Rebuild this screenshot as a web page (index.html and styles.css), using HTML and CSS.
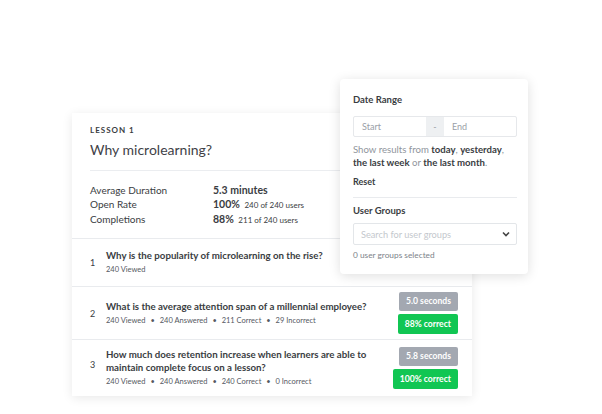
FILE: index.html
```html
<!DOCTYPE html>
<html>
<head>
<meta charset="utf-8">
<link rel="stylesheet" href="styles.css">
</head>
<body>
<div class="stage">
  <div class="card">
    <div class="card-head">
      <div class="eyebrow">LESSON 1</div>
      <div class="title">Why microlearning?</div>
      <div class="rule"></div>
      <div class="stats">
        <div class="stat-label">Average Duration</div>
        <div class="stat-val"><b>5.3 minutes</b></div>
        <div class="stat-label">Open Rate</div>
        <div class="stat-val"><b>100%</b> <span class="small">240 of 240 users</span></div>
        <div class="stat-label">Completions</div>
        <div class="stat-val"><b>88%</b> <span class="small">211 of 240 users</span></div>
      </div>
    </div>
    <div class="q q1">
      <div class="qnum">1</div>
      <div class="qbody">
        <div class="qtitle">Why is the popularity of microlearning on the rise?</div>
        <div class="qsub">240 Viewed</div>
      </div>
    </div>
    <div class="q q2">
      <div class="qnum">2</div>
      <div class="qbody">
        <div class="qtitle">What is the average attention span of a millennial employee?</div>
        <div class="qsub">240 Viewed <span class="dot">•</span> 240 Answered <span class="dot">•</span> 211 Correct <span class="dot">•</span> 29 Incorrect</div>
      </div>
      <div class="badges">
        <div class="badge grey">5.0 seconds</div>
        <div class="badge green">88% correct</div>
      </div>
    </div>
    <div class="q q3">
      <div class="qnum">3</div>
      <div class="qbody">
        <div class="qtitle">How much does retention increase when learners are able to maintain complete focus on a lesson?</div>
        <div class="qsub">240 Viewed <span class="dot">•</span> 240 Answered <span class="dot">•</span> 240 Correct <span class="dot">•</span> 0 Incorrect</div>
      </div>
      <div class="badges">
        <div class="badge grey">5.8 seconds</div>
        <div class="badge green">100% correct</div>
      </div>
    </div>
  </div>

  <div class="panel">
    <div class="p-head">Date Range</div>
    <div class="range">
      <div class="field">Start</div>
      <div class="sep">-</div>
      <div class="field">End</div>
    </div>
    <div class="help">Show results from <b>today</b>, <b>yesterday</b>, <b>the last week</b> or <b>the last month</b>.</div>
    <div class="reset">Reset</div>
    <div class="p-rule"></div>
    <div class="p-head">User Groups</div>
    <div class="select">
      <span>Search for user groups</span>
      <svg width="8" height="6" viewBox="0 0 8 6"><path d="M1 1.5 L4 4.5 L7 1.5" fill="none" stroke="#444" stroke-width="1.6"/></svg>
    </div>
    <div class="selected">0 user groups selected</div>
  </div>
</div>
</body>
</html>
```

FILE: styles.css
```css
* { box-sizing: border-box; }
html, body { margin: 0; padding: 0; background: #fff; }
body {
  font-family: Lato, "Open Sans", "Liberation Sans", sans-serif;
  color: #3a3d42;
  width: 602px;
  height: 414px;
  overflow: hidden;
}
.stage {
  position: relative;
  width: 602px;
  height: 414px;
  padding: 113px 0 0 72px;
}
.card {
  width: 400px;
  background: #fff;
  box-shadow: 0 2px 10px rgba(0, 0, 0, 0.09);
}
.card-head {
  padding: 12px 18px 11px;
  border-bottom: 1px solid #e9ebee;
}
.eyebrow {
  font-size: 8px;
  font-weight: 700;
  letter-spacing: 1px;
  line-height: 10px;
  color: #3a3d42;
}
.title {
  margin-top: 5px;
  font-size: 14px;
  line-height: 20px;
  color: #3f4247;
}
.rule {
  margin-top: 10px;
  height: 1px;
  background: #ebedf0;
}
.stats {
  margin-top: 12px;
  display: grid;
  grid-template-columns: 123px 1fr;
  font-size: 10px;
  line-height: 14px;
}
.stat-val b { font-weight: 700; font-size: 10.5px; }
.small { font-size: 8px; margin-left: 2px; }
.q {
  display: flex;
  align-items: center;
  padding: 10px 14px 10px 18px;
  border-bottom: 1px solid #e9ebee;
}
.q:last-child { border-bottom: none; }
.q2 { padding-top: 5px; padding-bottom: 5px; }
.q3 { padding-top: 7px; padding-bottom: 7px; }
.qnum {
  width: 16px;
  flex: none;
  font-size: 9px;
  color: #3a3d42;
}
.q3 .qnum { margin-top: -8px; }
.qbody { flex: 1; padding-right: 22px; }
.qtitle {
  font-size: 9.7px;
  font-weight: 700;
  line-height: 13px;
  color: #3a3d42;
}
.qsub {
  margin-top: 2px;
  font-size: 7.5px;
  line-height: 12px;
  color: #55595f;
}
.dot { margin: 0 3px; }
.badges {
  display: flex;
  flex-direction: column;
  align-items: flex-end;
  gap: 3px;
}
.badge {
  min-width: 59px;
  height: 19px;
  padding: 0 7px;
  border-radius: 2px;
  font-size: 8.6px;
  font-weight: 700;
  color: #fff;
  line-height: 19px;
  text-align: center;
}
.badge.grey { background: #a3a8b1; }
.badge.green { background: #11c653; height: 20px; line-height: 20px; }

.panel {
  position: absolute;
  left: 340px;
  top: 79px;
  width: 188px;
  padding: 14px 11px 13px 13px;
  background: #fff;
  border-radius: 4px;
  box-shadow: 0 2px 12px rgba(0, 0, 0, 0.13);
}
.p-head {
  font-size: 9.5px;
  font-weight: 700;
  line-height: 13px;
  color: #3a3d42;
}
.range {
  margin-top: 10px;
  display: flex;
  height: 21px;
  border: 1px solid #e6e8eb;
  border-radius: 2px;
}
.field {
  flex: 1;
  padding-left: 8px;
  font-size: 9px;
  line-height: 19px;
  color: #9aa0a7;
}
.sep {
  width: 18px;
  background: #eef0f2;
  text-align: center;
  font-size: 9px;
  line-height: 19px;
  color: #9aa0a7;
}
.help {
  margin-top: 6px;
  font-size: 9.6px;
  line-height: 13px;
  color: #8f959c;
}
.help b { color: #3a3d42; font-weight: 700; }
.reset {
  margin-top: 6px;
  font-size: 9px;
  font-weight: 700;
  line-height: 13px;
  color: #3a3d42;
}
.p-rule {
  margin-top: 9px;
  margin-bottom: 6px;
  height: 1px;
  background: #e9ebee;
}
.select {
  margin-top: 6px;
  height: 22px;
  border: 1px solid #e3e6e9;
  border-radius: 2px;
  display: flex;
  align-items: center;
  justify-content: space-between;
  padding: 0 6px 0 7px;
  font-size: 9.2px;
  color: #c4c8cd;
}
.selected {
  margin-top: 5px;
  font-size: 8.3px;
  line-height: 11px;
  color: #7d838a;
}
```
